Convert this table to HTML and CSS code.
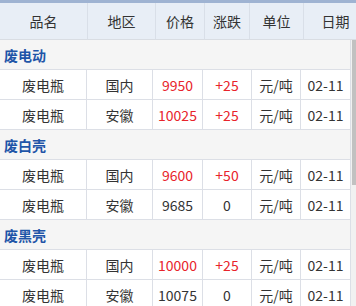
FILE: index.html
```html
<!DOCTYPE html>
<html>
<head>
<meta charset="utf-8">
<link rel="stylesheet" href="styles.css">
</head>
<body>
<div class="wrap">
  <div class="head">
    <div class="hc">品名</div>
    <div class="hc">地区</div>
    <div class="hc">价格</div>
    <div class="hc">涨跌</div>
    <div class="hc">单位</div>
    <div class="hc">日期</div>
  </div>
  <div class="bodywrap">
    <div class="grid">
      <div class="group">废电动</div>
      <div class="c">废电瓶</div><div class="c">国内</div><div class="c red">9950</div><div class="c red">+25</div><div class="c">元/吨</div><div class="c">02-11</div>
      <div class="c">废电瓶</div><div class="c">安徽</div><div class="c red">10025</div><div class="c red">+25</div><div class="c">元/吨</div><div class="c">02-11</div>
      <div class="group">废白壳</div>
      <div class="c">废电瓶</div><div class="c">国内</div><div class="c red">9600</div><div class="c red">+50</div><div class="c">元/吨</div><div class="c">02-11</div>
      <div class="c">废电瓶</div><div class="c">安徽</div><div class="c">9685</div><div class="c">0</div><div class="c">元/吨</div><div class="c">02-11</div>
      <div class="group">废黑壳</div>
      <div class="c">废电瓶</div><div class="c">国内</div><div class="c red">10000</div><div class="c red">+25</div><div class="c">元/吨</div><div class="c">02-11</div>
      <div class="c">废电瓶</div><div class="c">安徽</div><div class="c">10075</div><div class="c">0</div><div class="c">元/吨</div><div class="c">02-11</div>
    </div>
    <div class="scroll"><div class="thumb"></div></div>
  </div>
</div>
</body>
</html>
```

FILE: styles.css
```css
html, body {
  margin: 0;
  padding: 0;
  background: #ffffff;
}
body {
  font-family: "Noto Sans CJK SC", "Noto Sans", sans-serif;
  font-size: 14px;
  color: #333333;
}
.wrap {
  width: 356px;
  height: 306px;
  overflow: hidden;
}
.head {
  display: grid;
  grid-template-columns: 88px 68px 49px 45px 54px 64px;
  border-top: 3px solid #9fb3d2;
  background: #e8eef6;
  height: 37px;
  box-sizing: content-box;
}
.hc {
  box-sizing: border-box;
  border-right: 1px solid #d9dfe8;
  border-bottom: 1px solid #d9dde3;
  display: flex;
  align-items: center;
  justify-content: center;
  color: #333333;
}
.bodywrap {
  display: flex;
  height: 266px;
}
.grid {
  display: grid;
  grid-template-columns: 87px 66px 50px 49px 49px 50px;
  grid-auto-rows: 30px;
  width: 351px;
  flex: none;
}
.c {
  box-sizing: border-box;
  border-right: 1px solid #dcdfe6;
  border-bottom: 1px solid #dcdfe6;
  display: flex;
  align-items: center;
  justify-content: center;
  white-space: nowrap;
}
.red {
  color: #e8242b;
}
.group {
  grid-column: 1 / -1;
  box-sizing: border-box;
  background: #f5f5f5;
  border-right: 1px solid #dcdfe6;
  border-bottom: 1px solid #dcdfe6;
  display: flex;
  align-items: center;
  padding-left: 4px;
  font-weight: bold;
  color: #1f55a8;
}
.scroll {
  flex: 1;
  background: #f1f1f1;
  display: flex;
  flex-direction: column;
}
.thumb {
  height: 145px;
  background: #c1c1c1;
  margin-left: 1px;
}
```
